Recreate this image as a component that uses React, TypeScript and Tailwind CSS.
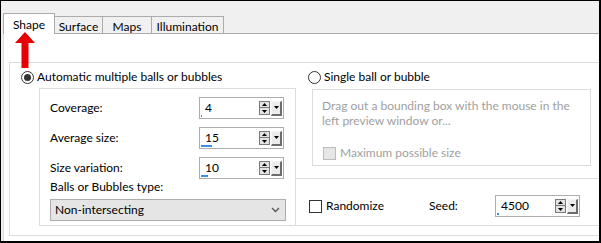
import React from 'react';

// small black triangle used inside the spin buttons
function Tri({ up }: { up?: boolean }) {
  return (
    <svg width="5" height="3" viewBox="0 0 5 3" className="block">
      <polygon points={up ? '2.5,0 5,3 0,3' : '0,0 5,0 2.5,3'} fill="#000" />
    </svg>
  );
}

function Spin({ value, bar }: { value: string; bar: number }) {
  return (
    <div className="relative flex h-[22px] w-[85px] items-center border border-[#abadb3] bg-white pl-[5px]">
      <span className="text-[12px] leading-none text-black">{value}</span>
      {/* value indicator under the text */}
      <div className="absolute bottom-[1px] left-[1px] h-[2px] bg-[#3d8ee6]" style={{ width: bar }} />
      <div className="ml-auto mr-[1px] flex items-center gap-[1px]">
        <div className="flex flex-col">
          <div className="flex h-[7px] w-[11px] items-center justify-center border border-[#7a7a7a] bg-[#e3e3e3]">
            <Tri up />
          </div>
          <div className="-mt-[1px] flex h-[8px] w-[11px] items-center justify-center border border-[#7a7a7a] bg-[#e3e3e3]">
            <Tri />
          </div>
        </div>
        <div className="flex h-[15px] w-[11px] items-center justify-center border-t border-l border-r-2 border-b-2 border-t-[#f5f5f5] border-l-[#f5f5f5] border-r-[#6d6d6d] border-b-[#6d6d6d] bg-[#ececec]">
          <Tri />
        </div>
      </div>
    </div>
  );
}

function Radio({ checked }: { checked?: boolean }) {
  return (
    <div className="flex h-[13px] w-[13px] items-center justify-center rounded-full border border-[#333] bg-white">
      {checked && <div className="h-[7px] w-[7px] rounded-full bg-[#333]" />}
    </div>
  );
}

export default function App() {
  return (
    <div className="relative h-[243px] w-[601px] overflow-hidden border-t border-l border-r-2 border-b-2 border-black bg-[#f0f0f0] font-['Lato',sans-serif] text-[12px] text-black">
      <div className="flex h-[243px] flex-col">
        {/* Tab strip */}
        <div className="flex h-[32px] shrink-0 items-end pl-[2px]">
          <div className="relative z-10 -mb-[1px] flex h-[21px] w-[52px] items-start justify-center border-t border-l border-r border-[#acacac] bg-white pt-[4px] leading-[13px]">
            Shape
          </div>
          <div className="flex h-[17px] w-[48px] items-start justify-center border-t border-r border-[#acacac] pt-[3px] leading-[13px]">
            Surface
          </div>
          <div className="flex h-[17px] w-[49px] items-start justify-center border-t border-r border-[#acacac] pt-[3px] leading-[13px]">
            Maps
          </div>
          <div className="flex h-[17px] w-[72px] items-start justify-center border-t border-r border-[#acacac] pt-[3px] leading-[13px]">
            Illumination
          </div>
        </div>

        {/* Tab page */}
        <div className="ml-[2px] flex-1 border-t border-l border-t-[#acacac] border-l-[#d9d9d9] bg-white pt-[28px]">
          <div className="ml-[5px] flex h-[174px] w-[600px] border border-[#dcdcdc]">
            {/* Left column */}
            <div className="w-[286px] shrink-0 pt-[6px]">
              <div className="ml-[11px] flex h-[16px] items-center gap-[3px]">
                <Radio checked />
                <span>Automatic multiple balls or bubbles</span>
              </div>
              <div className="ml-[29px] mt-[3px] flex h-[138px] w-[257px] flex-col border border-[#dcdcdc] pl-[10px] pt-[8px]">
                <div className="flex flex-col gap-[8px]">
                  <div className="flex items-center">
                    <span className="w-[149px]">Coverage:</span>
                    <Spin value="4" bar={1} />
                  </div>
                  <div className="flex items-center">
                    <span className="w-[149px]">Average size:</span>
                    <Spin value="15" bar={11} />
                  </div>
                  <div className="flex items-center">
                    <span className="w-[149px]">Size variation:</span>
                    <Spin value="10" bar={7} />
                  </div>
                </div>
                <div className="h-[16px] leading-[16px]">Balls or Bubbles type:</div>
                <div className="mt-[4px] flex h-[22px] w-[236px] items-center border border-[#acacac] bg-[#e5e5e5] pl-[4px] pr-[5px]">
                  <span>Non-intersecting</span>
                  <svg width="9" height="6" viewBox="0 0 9 6" className="ml-auto">
                    <polyline points="1,1 4.5,4.5 8,1" fill="none" stroke="#555" strokeWidth="1.3" />
                  </svg>
                </div>
              </div>
            </div>

            {/* Right column */}
            <div className="flex-1 pt-[6px]">
              <div className="ml-[12px] flex h-[16px] items-center gap-[3px]">
                <Radio />
                <span>Single ball or bubble</span>
              </div>
              <div className="ml-[16px] mt-[4px] h-[77px] w-[279px] border border-[#dcdcdc] pl-[9px] pt-[8px] text-[#a0a0a0]">
                <div className="whitespace-nowrap leading-[15px]">
                  Drag out a bounding box with the mouse in the
                  <br />
                  left preview window or...
                </div>
                <div className="ml-[1px] mt-[17px] flex h-[16px] items-center gap-[4px]">
                  <div className="h-[13px] w-[13px] border border-[#bcbcbc] bg-[#e6e6e6]" />
                  <span>Maximum possible size</span>
                </div>
              </div>
              <div className="mt-[12px] flex h-[48px] w-[320px] items-center border-t border-r border-b border-[#dcdcdc] pt-[8px]">
                <div className="ml-[13px] flex w-[120px] items-center gap-[4px]">
                  <div className="h-[13px] w-[13px] border border-[#333] bg-white" />
                  <span>Randomize</span>
                </div>
                <span className="w-[66px]">Seed:</span>
                <Spin value="4500" bar={2} />
              </div>
            </div>
          </div>
        </div>
      </div>

      {/* red pointer under the Shape tab */}
      <svg width="20" height="36" viewBox="0 0 20 36" className="absolute left-[14px] top-[31px] z-20">
        <polygon points="10,0 20,11 13.5,11 13.5,36 6.5,36 6.5,11 0,11" fill="#e60000" />
      </svg>
    </div>
  );
}
